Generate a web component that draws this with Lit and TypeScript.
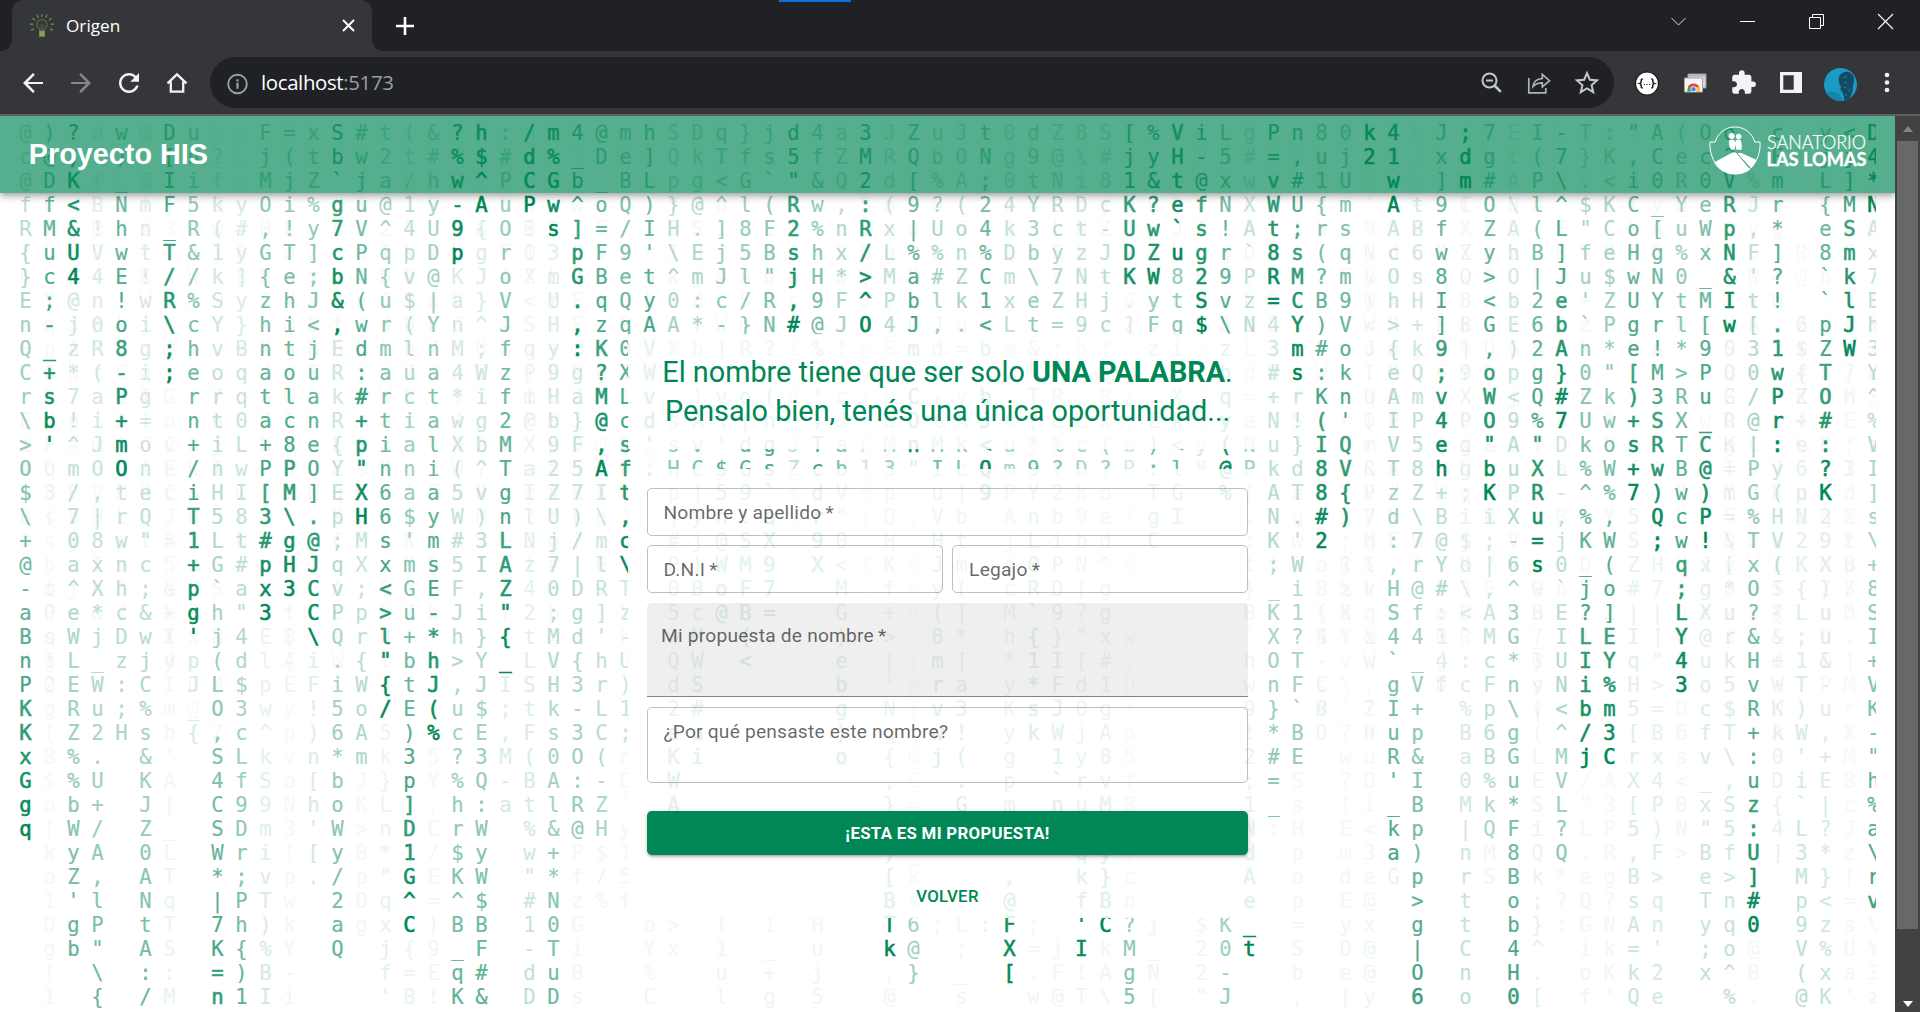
import { LitElement, html, css, svg } from "lit";
import { customElement } from "lit/decorators.js";

const ROWS = 37;
const COLS = 78;

/** A trail of characters: first row, characters downwards, age in steps of the last one. */
type Trail = [number, string, number];

const LEFT: Trail[][] = [
  [[0, "@c@fR{}EnQCr\\>O$\\+@-aBnPKKxGgq", 0]],
  [[0, ")@DfMuc;-_+sb'", 0], [14, "q3(s,oPqgOg{B$o[ko1Dg!1", 58]],
  [[0, "?;K<&U4", 0], [7, "@jz*7!^m/70a^eWLERZ%%bWyZ'gb", 9]],
  [[0, "uz(B!V4n0R(aiJO,|8xX*j_Wu2.U+/A,lP\"\\{", 10]],
  [[0, "w)_NhwE!o8-P+mO", 0], [15, "trwnhcDz:;H", 22]],
  [[0, "@.@mnt!wigig=oneQ\"c;&wjC%s&KJZ0ANtA:/", 10]],
  [[0, "D[IF_T/R\\;;", 0], [11, "GovecJ=5&+IyImh'A|_LTqTS:M", 48]],
  [[0, "uni5R&/%chern+/iT1+pg'", 0], [22, "pJ_{", 36]],
  [[1, "?fk(1kSYvortinH5LG`hj(LO,S4CSW*|7K=n", 4]],
  [[3, "y#y]y}Bqq0LwI8t#a\"4d$3cLf9Dr;Ph{)1", 9]],
  [[0, "FjMO,G{zhnata+P[3#px3", 0], [21, "Elpw^kS9mivT)%BI", 34]],
  [[0, "=(ji!Tehitolc8PM\\gH3", 0], [20, "f[{LypvoN3!pwkY-i", 55]],
  [[0, "xtZ%y];J<juaneO].@JCC\\", 0], [22, "iF!)n[h'[.", 33]],
  [[0, "Sb`g7cb&,", 0], [9, "ERkR{YEp;qvPQ.i56*boWy/2aQ", 10]],
  [[0, "#wjuVPN(wd:#+p\"XH", 0], [17, "MX;pr{WoAm", 22], [27, "JK>0pOg", 58]],
  [[0, "t2a@^q{urmartin66sx<>l\"{/", 0], [25, "5k}Ln*\"qxjf'", 42]],
  [[0, "(t/14pv$(luciana$'mGu+btE)3p]D1G^C", 0], [34, "{=B", 50]],
  [[0, "&#hyUD@|YnataliaymsE-*hJ(%", 0], [26, "5Y,C/E=)9E!", 53]],
  [[0, "?%w-9p", 0], [6, "KanM4*wX(5W#5FJh>,uc?%hr$K^B_qK", 9]],
  [[0, "h$^A", 0], [4, "{gJ}^;Wigb^v)3I,i}YJ$E3Q:WyW$BF#&", 8]],
  [[0, ":#PuOroVJfzf2MTgnLAZ\"{_", 0], [23, "I;,M-a", 36]],
  [[0, "/dCP", 0], [4, "BOX<SqPm@XaIlNz42tLStF(Bt%w\"#1-dD", 27]],
  [[0, "m%Gws", 0], [5, "3mUHy9Hb92ZUj70;MVHks0Al&+*N0TuD", 11]],
  [[0, "4_b^]pG.,:", 0], [10, "ga}F57)/|Dgd{3-3O:R@", 16], [30, "PfzGiBs", 55]],
  [[0, "@D_o=FBqzK?M@,A", 0], [15, "I\\mlR]'hrLC(-ZH", 21], [30, "$/%", 55]],
  [[0, "meBQ/9eQq0XLcsft,c\\", 0], [19, "Tz-U)1;", 30], [26, "nC`y15f", 57]],
];

const CENTRE_ROWS = [
  "hSDq}jd4a3JZuJt0dZ8S[%ViL",
  "]QkTfs5fZMRQbONg9@\\#jyH-5",
  "Lpg<G`\"&Q2d[%A;0tNi81&t@x",
  ")}@^l(Rw,:(9?(24YRDcK?efN",
  "IH.]8F2%nRx|Uo4k3ct-Uw`s!",
  "'\\Ej5Bshx/L%%n%DbyzJDZugr",
  "t^mJl\"jH*>Ma#ZCm\\7NtKW829",
  "y0:c/R,9F^Pblk1xeZHj.ytSv",
  "AA*-}N#@JO4J,.<Lt=9c]Fg$\\",
  "VXh]R?Z%fpSmd=bm&;hf\"zijz",
  "W   i   jy  s  -   c    h",
  "v.)vo(R'cYeC-yb,TR`BY.XJq",
  "dsA\\|n=)J.aO%AJ<;eLx,ZkEy",
  "'sv'dgJTaFMnMk<u*%c(b)<y(",
  ".HC$GsZcb13\"ILQm9?D?R:ld@",
  " p]59`sdV6p.u]9PY2ko.TG.%",
  " ]yn!a.r\"jQ,Vb)Anb9e?gI",
  " #j@SX.90.H.Ht`jLibd.C",
  " P)WM9.X<IKGJmbj0PN^0",
  " 0BoF7.PM.fDy(2cRD[g",
  " 5c@B=.DG.+A(]pM`9?g",
  " wM.(...).>\"8*0h{}\"xw",
  " QW?<   ef|jm]a*1I[#;",
  " dS.;   b|'Wra5y*Fd1D",
  " 2#<y   g.N}v3.KsJ0g*",
  " eu..   ).q(w!3ykWjAp",
  " Ki+DgY.o.{Gj(Ogj1y85",
  " W/..,H...,C).!p.`rvf",
  " A...kd   }=cG.m.nuM8",
  "",
  "          )_     Xqy(",
  "          [k(lD,  k}c",
  "          Bs   @  fBn",
  "o> T 1 H  T6;L:F; 'C?j $K",
  "Yx 1 _ u  k@ ; X=jIkM_ 20",
  "%  u + j  ,} _ [.F!AgN 2-",
  "C  l g 5  @  s  w@T\\5[ \"J",
];

/** Per centre column: last row of each trail and the age found there. */
const CENTRE_ENDS: [number, number][][] = [
  [[14, 0], [36, 57]], [[28, 2], [36, 57]], [[26, 2], [36, 58]], [[20, 3], [36, 55]], [[22, 1], [36, 58]],
  [[20, 0], [36, 56]], [[8, 0], [16, 28], [36, 58]], [[18, 2], [36, 55]], [[26, 2]], [[8, 0], [19, 30]],
  [[34, 0], [36, 57]], [[13, 1], [35, 18]], [[26, 1], [34, 55]], [[28, 1], [36, 55]], [[15, 0], [33, 45]],
  [[35, 0]], [[25, 0], [36, 55]], [[28, 1], [36, 56]], [[34, 1], [36, 55]], [[33, 0], [36, 53]],
  [[6, 2], [36, 14]], [[6, 1], [17, 8], [36, 54]], [[5, 0], [16, 8]], [[8, 0], [13, 35], [36, 52]], [[15, 0], [36, 17]],
];

const RIGHT: Trail[][] = [
  [[0, "g#wXA`PzNLd=eNP[.:t}B`hw9!2;1NdAe_t", 0]],
  [[0, "P=vWt8R=", 0], [8, "43#+NukANK;_KXOn}*#=_", 14], [29, ":", 57]],
  [[0, "n,#U;sMCYms", 0], [11, "r!}dT.'Wi1?TF`BE", 17], [27, "SsHpop=Sb,", 55]],
  [[0, "8u1{r(?B)#:K(I88#2", 0], [18, "o8{S-CBD", 55]],
  [[0, "0jUmsqm9Vokn'QV{)", 2], [17, ";]%B'v\\`?w?!EmdEyDe|", 55]],
  [[0, "k2", 0], [2, "{'9%&}<o.O[m&V7MIvq&w,?nuOi<3e@x@@y", 54]],
  [[0, "41wA", 0], [4, "AcOh>{eAIVTzd:,HS4`gIuR'_ka", 6], [31, "G", 50]],
  [[3, "tB6sH+kQmP58Z\\7r@f4_V+p&IBp)p>g|O6", 5]],
  [[0, "Jx]9fw8I]9;v4eh", 0], [15, "+B@Y#", 24], [20, ":14f", 45]],
  [[0, ";dm", 0], [3, "CXZQ88]9XPgg;i$o\\<`:c%Ba0M|nrttCno", 26]],
  [[0, "7g#OZy><G,oWO\"bK", 0], [16, "i;|,AMcFp6B%kQ", 22], [30, "MS", 57]],
  [[0, "EtA\\AhObE)p<9AuPX-6^3G*n\\gGu*F8Bob4H0", 5]],
  [[0, "I(Pl(B|262gQ%\"XRu=s", 0], [19, "wB_}y|(LESiQk;}^.[", 44]],
  [[0, "-7\\^L]JebA}#7", 0], [13, "DL-,j0`EIUN<^MVL?Q", 16], [31, "*?:", 56]],
  [[0, "T}.$\"fu'`n0ZUk%^%K_j?LIib/j", 0], [27, "/\"L.eQGiof", 55]],
  [[0, ":K<KCe$ZP*\"kwoW%,W(o]EY%m3C", 0], [27, "A3PRg?NkK'", 56]],
  [[0, "\",iCoHwUge[)+s+7", 0], [16, "5SZ#|IqH5[rX[5,BsA=kQ", 30]],
  [[0, "AC0_[gNYr!M3SRw)Q;", 0], [18, "H7|]\">=Bx4P)F>qn'2e", 34]],
  [[0, "(eRYu%0tl*>RXTBwcwq;LY43", 0], [24, "D6s<0N>", 57]],
  [[0, "Oc0eWx_M[9Pu_C@)P!", 0], [18, "xgX@uocfv_x\"BeTy;x", 28]],
  [[0, "o?VRpN&Iw", 0], [9, "OQGRK=m=\\[*urk5$T\\,S5f>nqo^%", 27]],
  [[2, "%J,F't[30/@|PG%TxO?&HvR+:uz:U]#0", 0], [34, "@B.", 57]],
  [[0, "cEmr*]?!.1wPr:", 0], [14, "y(HV(", 28], [19, "S{&+WKk0D{4]", 46]],
  [[8, "6${Z+e6pN2K{L;1T)W'i`L3Mp9V(@", 25]],
  [[0, "yjL{e8``pZTO#:?K", 0], [16, "29X)uu&-u,+E|?*}<z%xK", 29]],
  [[0, "<j]MSmklJW", 0], [10, "jME,3dZLB/O.]MrXMBcJz[=sUa'", 58]],
  [[0, "D4*N", 0], [4, "Ax7Eh3Y^%VI]s\\+8SI+VK-\"h%a\\rv", 5], [33, "\\Y3z", 57]],
];

interface Cell { ch: string; alpha: number }

const fade = (age: number) => Math.max(0.035, Math.pow(0.95, age));

function fromTrails(trails: Trail[]): Cell[] {
  const cells: Cell[] = Array.from({ length: ROWS }, () => ({ ch: " ", alpha: 0 }));
  for (const [start, text, age] of trails) {
    [...text].forEach((ch, i) => {
      const row = start + i;
      if (row < ROWS) cells[row] = { ch, alpha: fade(age + text.length - 1 - i) };
    });
  }
  return cells;
}

function fromCentre(ends: [number, number][], col: number): Cell[] {
  return Array.from({ length: ROWS }, (_, row) => {
    const end = ends.find(([last]) => row <= last);
    const ch = CENTRE_ROWS[row][col] ?? " ";
    return end ? { ch, alpha: fade(end[1] + end[0] - row) } : { ch, alpha: 0.035 };
  });
}

const COLUMNS: Cell[][] = [
  ...LEFT.map(fromTrails),
  ...CENTRE_ENDS.map(fromCentre),
  ...RIGHT.map(fromTrails),
];

/** Almost erased characters of earlier passes. */
const RESIDUE: string[][] = (() => {
  let seed = 7;
  const next = (n: number) => {
    seed = (seed * 1103515245 + 12345) % 2147483648;
    return Math.floor((seed / 2147483648) * n);
  };
  const set = "ABCDEFGHIJKLMNOPQRSTUVWXYZabcdefghijkmnopqrstuvwxyz0123456789@#$%&*+=?";
  return Array.from({ length: COLS }, () => {
    const depth = 17 + next(11);
    return Array.from({ length: ROWS }, (_, r) => (r < depth && next(10) < 8 ? set[next(set.length)] : " "));
  });
})();

@customElement("code-rain")
export class CodeRain extends LitElement {
  static styles = css`
    :host { display: block; overflow: hidden; width: 1876px; height: 896px; }
    .columns { display: flex; width: 1900px; padding: 5px 0 0 13.5px; box-sizing: border-box;
      font: 20.6px/24px "DejaVu Sans Mono", monospace; color: #008755; }
    .column { width: 24px; flex: none; display: grid; grid-template-columns: 24px; text-align: center; }
    .trail, .residue { grid-area: 1 / 1; display: block; }
    .residue { color: rgba(20, 50, 40, 0.03); font-weight: bold; }
    .cell { display: block; height: 24px; white-space: pre; }
    .trail .cell { -webkit-text-stroke: 0.2px #008755; }
    .trail .fresh { -webkit-text-stroke: 0.6px #008755; }
  `;
  render() {
    return html`<div class="columns">${COLUMNS.map((cells, c) => html`
      <div class="column">
        <div class="residue">${RESIDUE[c].map((ch) => html`<span class="cell">${ch}</span>`)}</div>
        <div class="trail">${cells.map((x) => html`<span class=${x.alpha > 0.76 ? "cell fresh" : "cell"} style="opacity:${x.alpha.toFixed(3)}">${x.ch}</span>`)}</div>
      </div>`)}</div>`;
  }
}

@customElement("browser-frame")
export class BrowserFrame extends LitElement {
  static styles = css`
    :host { display: block; font-family: "Open Sans", "Noto Sans", sans-serif; color: #fff; }
    svg { display: block; overflow: visible; }
    .strip { height: 51px; background: #202124; display: flex; align-items: stretch; position: relative; }
    .accent { position: absolute; left: 779px; top: 0; width: 72px; height: 2px; background: #0a74d6; }
    .edge { width: 12px; background: #35363a; }
    .edge i { display: block; height: 51px; background: #202124; }
    .edge.l i { border-bottom-right-radius: 11px; }
    .edge.r i { border-bottom-left-radius: 11px; }
    .tab { width: 360px; box-sizing: border-box; background: #35363a; border-radius: 12px 12px 0 0; display: flex; align-items: center; padding: 0 16px 0 18px; }
    .title { font-size: 17.2px; margin-left: 12px; flex: 1; line-height: 24px; }
    .plus { width: 42px; display: grid; place-items: center; }
    .space { flex: 1; }
    .win { width: 69px; display: grid; place-items: center; padding-bottom: 8px; box-sizing: border-box; }
    .bar { height: 63px; background: #35363a; display: flex; align-items: center; padding: 0 18px; gap: 18px; box-sizing: border-box; }
    .icon { width: 30px; height: 30px; display: grid; place-items: center; flex: none; }
    .pill { flex: 1; height: 51px; border-radius: 26px; background: #202124; display: flex; align-items: center; gap: 18px; padding: 0 12px; box-sizing: border-box; }
    .url { flex: 1; font-size: 20.4px; line-height: 28px; margin-left: -9px; padding-bottom: 2px; color: #9aa0a6; letter-spacing: -0.35px; }
    .url b { font-weight: 400; color: #fff; }
    .rule { height: 2px; background: #606164; }
  `;
  render() {
    const mat = (d: string, fill = "#f1f3f4") => html`<svg width="30" height="30" viewBox="0 0 24 24"><path d=${d} fill=${fill}></path></svg>`;
    return html`
      <div class="strip">
        <div class="accent"></div>
        <div class="edge l"><i></i></div>
        <div class="tab">
          <svg width="24" height="24" viewBox="0 0 24 24" fill="none" stroke="#6d8a46" stroke-width="1.3">
            <path d="M9.7 17v-2.2C8 13.800 6.900 12.500 6.900 10.700a5.100 5.100 0 0 1 10.200 0c0 1.800-1.100 3.100-2.800 4.100V17" stroke="#566b3f"></path>
            <path d="M10 10.500l2 1 2-1M11.200 11.500V17M12.800 11.500V17" stroke="#4c5b3d" stroke-width="1"></path>
            <path d="M9.800 17.500h4.400v4.600h-4.400z" fill="#8aa35a" stroke="#7c9a4c"></path>
            <path d="M12 0v3M7 .8l1.300 2.900M17 .8l-1.300 2.900M2.300 4.200L5 6.200M21.700 4.200L19 6.200M0 10l3.300.3M24 10l-3.300.3M1 16.300l3-1.500M23 16.300l-3-1.500"></path>
          </svg>
          <div class="title">Origen</div>
          <svg width="15" height="15" viewBox="0 0 15 15"><path d="M2 2l11 11M13 2L2 13" stroke="#fff" stroke-width="2"></path></svg>
        </div>
        <div class="edge r"><i></i></div>
        <div class="plus"><svg width="18" height="18" viewBox="0 0 18 18"><path d="M9 0v18M0 9h18" stroke="#fff" stroke-width="2.600"></path></svg></div>
        <div class="space"></div>
        <div class="win"><svg width="15" height="9" viewBox="0 0 15 9"><path d="M.5 1l7 7 7-7" stroke="#ddd" fill="none"></path></svg></div>
        <div class="win"><svg width="15" height="15" viewBox="0 0 15 15"><path d="M0 7.500h15" stroke="#fff"></path></svg></div>
        <div class="win"><svg width="15" height="15" viewBox="0 0 15 15"><path d="M.5 3.500h11v11H.5zM3.500 3.500v-3h11v11h-3" stroke="#fff" fill="none"></path></svg></div>
        <div class="win"><svg width="15" height="15" viewBox="0 0 15 15"><path d="M0 0l15 15M15 0L0 15" stroke="#fff" stroke-width="1.100"></path></svg></div>
      </div>
      <div class="bar">
        <div class="icon">${mat("M20 11.200H7.830l5.590-5.790L12 4l-8 8 8 8 1.410-1.410L7.830 12.800H20z")}</div>
        <div class="icon">${mat("M4 11.200h12.170l-5.590-5.790L12 4l8 8-8 8-1.410-1.410 5.580-5.790H4z", "#85868a")}</div>
        <div class="icon">${mat("M17.65 6.350C16.200 4.900 14.210 4 12 4c-4.420 0-7.990 3.580-7.990 8s3.570 8 7.990 8c3.730 0 6.840-2.550 7.730-6h-2.080c-.82 2.330-3.040 4-5.650 4-3.310 0-6-2.690-6-6s2.690-6 6-6c1.660 0 3.140.69 4.220 1.780L13 11h7V4l-2.350 2.350z")}</div>
        <div class="icon"><svg width="22" height="22" viewBox="0 0 22 22"><path d="M1.500 11.300L11 2.300l9.500 9M4.800 9.500v10.200h12.400V9.500" fill="none" stroke="#f1f3f4" stroke-width="2.300"></path></svg></div>
        <div class="pill">
          <div class="icon"><svg width="22" height="22" viewBox="0 0 22 22"><circle cx="11.500" cy="12" r="9.300" fill="none" stroke="#9aa0a6" stroke-width="1.900"></circle><path d="M11.500 10.700v6M11.500 7.200v2.200" stroke="#9aa0a6" stroke-width="2.200"></path></svg></div>
          <div class="url"><b>localhost</b>:5173</div>
          <div class="icon"><svg width="21" height="21" viewBox="0 0 21 21" fill="none" stroke="#c3c6ca" stroke-width="2"><circle cx="8.500" cy="8.500" r="7"></circle><path d="M13.500 13.500l6.300 6.300" stroke-width="2.600"></path><path d="M5 8.500h7"></path></svg></div>
          <div class="icon"><svg width="24" height="22" viewBox="0 0 24 22" fill="none" stroke="#aeb1b5" stroke-width="1.700"><path d="M1.800 6v14.800h17V16"></path><path d="M6 14.500c.6-5 4-7.600 9.300-8V2.300l7.200 6.400-7.200 6.300v-4.200c-4.200 0-7 1-9.300 3.700z"></path></svg></div>
          <div class="icon">${mat("M22 9.240l-7.190-.62L12 2 9.190 8.630 2 9.240l5.460 4.730L5.820 21 12 17.270 18.180 21l-1.630-7.030L22 9.240zM12 15.400l-3.760 2.270 1-4.280-3.320-2.880 4.380-.38L12 6.100l1.710 4.040 4.380.38-3.320 2.880 1 4.280L12 15.400z", "#c3c6ca")}</div>
        </div>
        <div class="icon"><svg width="24" height="24" viewBox="0 0 24 24"><circle cx="12" cy="12.500" r="11.500" fill="#fff" stroke="#111" stroke-width="1.200"></circle><path d="M7.800 8c-1.800 0-1.600 1-1.600 2.300S6 12.200 4.900 12.500c1.100.3 1.300.9 1.300 2.200s-.2 2.300 1.600 2.300M16.200 8c1.800 0 1.600 1 1.600 2.300s.2 1.900 1.300 2.200c-1.100.3-1.300.9-1.300 2.200s.2 2.300-1.600 2.300" fill="none" stroke="#222" stroke-width="1.600"></path><path d="M8.800 13.500h1.200M11.400 13.500h1.200M14 13.500h1.200" stroke="#222" stroke-width="1.200"></path></svg></div>
        <div class="icon"><svg width="22" height="22" viewBox="0 0 22 22"><path d="M4 2h18v14H4z" fill="#d8d8d8" stroke="#9a9a9a"></path><path d="M4.500 2.500h17v2h-17z" fill="#b5b5b5"></path><path d="M.5 6h18v14H.5z" fill="#f5f5f5" stroke="#a5a5a5"></path><path d="M3.300 19.500v-1a6.300 6.300 0 0 1 6.200-6l0 7z" fill="#35a853"></path><path d="M3.600 15.500a6.500 6.500 0 0 1 11.900 0z" fill="#e8453c"></path><path d="M10 15.500h5.500c.5 1.300.7 2.700.3 4H10z" fill="#fbc02d"></path><circle cx="9.500" cy="17.200" r="2.900" fill="#fff"></circle><circle cx="9.500" cy="17.200" r="2.200" fill="#4285f4"></circle></svg></div>
        <div class="icon"><svg width="27" height="27" viewBox="0 0 24 24"><path d="M20.500 11H19V7c0-1.100-.9-2-2-2h-4V3.500a2.500 2.500 0 0 0-5 0V5H4c-1.100 0-1.990.9-1.990 2v3.800H3.500c1.490 0 2.700 1.210 2.700 2.700s-1.210 2.700-2.700 2.700H2V20c0 1.100.9 2 2 2h3.800v-1.500c0-1.490 1.210-2.700 2.700-2.700s2.700 1.210 2.700 2.700V22H17c1.100 0 2-.9 2-2v-4h1.500a2.500 2.500 0 0 0 0-5z" fill="#f1f3f4"></path></svg></div>
        <div class="icon"><svg width="22" height="21" viewBox="0 0 22 21"><path d="M0 0h22v21H0zM3.300 3.300v14.400h10.400V3.300z" fill="#f1f3f4" fill-rule="evenodd"></path></svg></div>
        <div class="icon"><svg width="33" height="33" viewBox="0 0 33 33"><circle cx="16.500" cy="16.500" r="16.500" fill="#1b9ac6"></circle><path d="M2 25c5-3 9-1 13 1l4 6.500A16.500 16.500 0 0 1 2 25z" fill="#1683ab"></path><path d="M15 9c2-5 9-7 13-3 3 3 2 8 1 12-.5 5-1 9-4 13l-5 1.500c1-3-1-6-2-9-2-1-2-3-1-5-2-2-3-6-2-9.500z" fill="#134a66"></path><path d="M19 10l4-2M20 14l3 1M19 19l4 1M24 24l3-4M21 26l2 2" stroke="#2a6f90" stroke-width="1.200"></path></svg></div>
        <div class="icon"><svg width="6" height="21" viewBox="0 0 6 21" fill="#f1f3f4"><circle cx="3" cy="3" r="2.300"></circle><circle cx="3" cy="10.500" r="2.300"></circle><circle cx="3" cy="18" r="2.300"></circle></svg></div>
      </div>
      <div class="rule"></div>`;
  }
}

const logo = svg`
  <path d="M1 16h5.200C8.500 7.500 16 1 26 1s17.500 6.500 19.800 15H51c1.200 16-9 32-25 32S-.2 32 1 16z" fill="none" stroke="#fff" stroke-width="1"></path>
  <path d="M5 36.500L22.500 27c1.500-1 3.300-1 4.800 0L41 43.500C37 47 31.500 48.300 26 48.300c-9 0-16.500-4.500-21-11.800z" fill="#fff"></path>
  <path d="M28.500 27.300c1.500-.8 3-.8 4.500 0L47.500 34c-1 3-3 6-5.300 8.300z" fill="#fff"></path>
  <circle cx="22.700" cy="10" r="3" fill="#fff"></circle><circle cx="29.700" cy="10.500" r="2.800" fill="#fff"></circle>
  <path d="M20 14.500c1.500-1.500 4-1.500 5.500 0l.7 2 .7-2c1.500-1.500 4-1.500 5 .2.9 3 1.200 6 .6 9l-2.200 0 0 0h-3l-.8-5-1 5h-3.300l-1-1.400c-1-2.500-1.500-5-1.200-7.800z" fill="#fff"></path>
  <text x="58" y="22.500" class="l1" textLength="99" lengthAdjust="spacingAndGlyphs">SANATORIO</text>
  <text x="57.500" y="40" class="l2" textLength="100" lengthAdjust="spacingAndGlyphs">LAS LOMAS</text>`;

@customElement("app-root")
export class AppRoot extends LitElement {
  static styles = css`
    :host { display: flex; flex-direction: column; width: 1920px; height: 1012px; overflow: hidden; background: #fff;
      font-family: Roboto, "Liberation Sans", sans-serif; }
    .view { flex: 1; min-height: 0; display: grid; grid-template-columns: 1895px 25px; }
    .page { display: grid; grid-template: 896px / 1895px; overflow: hidden; }
    .layer { grid-area: 1 / 1; min-width: 0; }
    .content { z-index: 1; display: flex; flex-direction: column; align-items: center; }
    .appbar { width: 100%; box-sizing: border-box; height: 77px; padding: 0 28px 0 28.8px; display: flex; align-items: center; justify-content: space-between;
      background: rgba(0, 135, 85, 0.667); box-shadow: 0 2px 5px -1px rgba(0,0,0,.2), 0 5px 6px rgba(0,0,0,.14), 0 1px 12px rgba(0,0,0,.12); }
    .brand { font: bold 28.8px/36px "Liberation Sans", Arial, sans-serif; color: #fff; padding-bottom: 1px; }
    .logo { display: block; overflow: visible; padding-bottom: 8px; }
    .l1 { font: 300 19px Lato, sans-serif; fill: #fff; stroke: #fff; stroke-width: .25px; }
    .l2 { font: 700 19px Lato, sans-serif; fill: #fff; stroke: #fff; stroke-width: .4px; }
    .main { width: 640px; padding-top: 141.200px; display: flex; flex-direction: column; gap: 19.200px; }
    .card { background: rgba(255, 255, 255, 0.88); padding: 19.200px; }
    .lead { margin: 0; font-size: 28.800px; line-height: 38.400px; text-align: center; color: #008755; white-space: nowrap; }
    .form { display: flex; flex-direction: column; gap: 9.600px; padding-bottom: 0; }
    .pair { display: grid; grid-template-columns: 1fr 1fr; gap: 9.600px; }
    .field { box-sizing: border-box; height: 48px; border: 1px solid rgba(0,0,0,.25); border-radius: 4.800px; padding: 10px 15.800px;
      font-size: 19.200px; line-height: 28px; letter-spacing: .2px; color: rgba(0,0,0,.6); }
    .filled { height: 94.500px; background: rgba(0,0,0,.062); border: 0; border-bottom: 1px solid rgba(0,0,0,.45); border-radius: 4.800px 4.800px 0 0; padding: 19px 14.400px; }
    .area { height: 75.600px; }
    .btn { height: 44px; border-radius: 4.800px; display: grid; place-items: center; font-size: 16.800px; line-height: 29px; letter-spacing: .32px; }
    .primary { margin-top: 18.800px; background: #008755; color: #fff; font-weight: 700;
      box-shadow: 0 3px 2px -2px rgba(0,0,0,.2), 0 2px 3px rgba(0,0,0,.14), 0 1px 6px rgba(0,0,0,.12); }
    .text { margin-top: 9.600px; color: #008755; font-weight: 500; }
    .scroll { background: #424242; display: flex; flex-direction: column; align-items: center; justify-content: space-between; }
    .arrow { height: 25px; display: grid; place-items: center; }
    .track { flex: 1; width: 21px; }
    .thumb { height: 788px; background: #686868; }
    .up, .down { border: 5.500px solid transparent; width: 0; height: 0; }
    .up { border-bottom: 6px solid #868686; border-top: 0; }
    .down { border-top: 6px solid #fff; border-bottom: 0; margin-top: 8px; }
  `;
  render() {
    return html`
      <browser-frame></browser-frame>
      <div class="view">
        <div class="page">
          <code-rain class="layer"></code-rain>
          <div class="layer content">
            <div class="appbar">
              <div class="brand">Proyecto HIS</div>
              <svg class="logo" width="158" height="49" viewBox="0 0 158 49">${logo}</svg>
            </div>
            <div class="main">
              <div class="card"><p class="lead">El nombre tiene que ser solo <b>UNA PALABRA</b>.<br>Pensalo bien, tenés una única oportunidad...</p></div>
              <div class="card form">
                <div class="field">Nombre y apellido&thinsp;*</div>
                <div class="pair"><div class="field">D.N.I&thinsp;*</div><div class="field">Legajo&thinsp;*</div></div>
                <div class="field filled">Mi propuesta de nombre&thinsp;*</div>
                <div class="field area">¿Por qué pensaste este nombre?</div>
                <div class="btn primary">¡ESTA ES MI PROPUESTA!</div>
                <div class="btn text">VOLVER</div>
              </div>
            </div>
          </div>
        </div>
        <div class="scroll">
          <div class="arrow"><div class="up"></div></div>
          <div class="track"><div class="thumb"></div></div>
          <div class="arrow"><div class="down"></div></div>
        </div>
      </div>`;
  }
}
